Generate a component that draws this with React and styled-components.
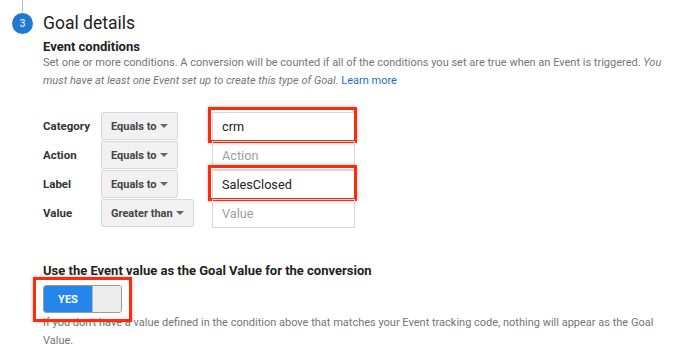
import React from "react";
import styled, { createGlobalStyle } from "styled-components";

const Global = createGlobalStyle`
  body {
    margin: 0;
    background: #fff;
    font-family: Roboto, "Liberation Sans", Arial, sans-serif;
  }
`;

const Page = styled.div`
  position: relative;
  width: 681px;
  height: 353px;
  overflow: hidden;
  background: #fff;
`;

const StepRail = styled.div`
  position: absolute;
  left: 22px;
  top: 0;
  width: 1px;
  height: 12px;
  background: #bdbdbd;
`;

const Header = styled.div`
  display: flex;
  align-items: center;
  gap: 10px;
  padding: 12px 0 0 12px;
  height: 22px;
`;

const StepBadge = styled.div`
  width: 21px;
  height: 21px;
  border-radius: 50%;
  background: #1f79cf;
  color: #fff;
  font-size: 10px;
  display: flex;
  align-items: center;
  justify-content: center;
`;

const Title = styled.h2`
  margin: 0;
  font-size: 17.5px;
  font-weight: 400;
  color: #212121;
  line-height: 22px;
`;

const Body = styled.div`
  padding: 0 5px 0 43px;
`;

const SubTitle = styled.h3`
  margin: 5px 0 0;
  font-size: 13px;
  font-weight: 700;
  color: #222;
  line-height: 15px;
`;

const Help = styled.p`
  margin: 0;
  font-size: 11px;
  line-height: 18px;
  color: #757575;
  em {
    font-style: italic;
  }
  a {
    color: #1a6fc2;
    text-decoration: none;
  }
`;

const Conditions = styled.div`
  margin-top: 22px;
  display: grid;
  grid-template-columns: 58px 111px 143px;
  grid-auto-rows: 28px;
  row-gap: 1px;
  align-items: center;
`;

const FieldLabel = styled.div`
  font-size: 11.5px;
  font-weight: 700;
  color: #333;
`;

const Select = styled.div`
  box-sizing: border-box;
  width: ${(p) => p.$w}px;
  height: 28px;
  display: flex;
  align-items: center;
  justify-content: space-between;
  padding: 0 9px 0 9px;
  background: #f1f1f1;
  border: 1px solid #d8d8d8;
  border-radius: 2px;
  font-size: 11px;
  font-weight: 700;
  color: #444;
  white-space: nowrap;
`;

const Caret = styled.span`
  width: 0;
  height: 0;
  border-left: 4px solid transparent;
  border-right: 4px solid transparent;
  border-top: 4px solid #666;
`;

const InputWrap = styled.div`
  position: relative;
  height: 28px;
`;

const Input = styled.div`
  box-sizing: border-box;
  height: 29px;
  border: 1px solid #d6d6d6;
  padding: 0 9px;
  display: flex;
  align-items: center;
  font-size: 12.7px;
  color: ${(p) => (p.$placeholder ? "#9e9e9e" : "#212121")};
`;

const Highlight = styled.span`
  position: absolute;
  left: -4px;
  right: -2px;
  top: -5px;
  bottom: -3px;
  border: 3px solid #fd2a0c;
  box-shadow: 0 0 4px rgba(0, 0, 0, 0.25);
  pointer-events: none;
`;

const ValueTitle = styled.h4`
  margin: 36px 0 0;
  font-size: 13px;
  font-weight: 700;
  color: #222;
  line-height: 16px;
`;

const ToggleWrap = styled.div`
  position: relative;
  width: 79px;
  margin-top: 6px;
`;

const Toggle = styled.div`
  display: flex;
  width: 79px;
  height: 28px;
  border-radius: 3px;
  overflow: hidden;
  border: 1px solid #9a9a9a;
  box-sizing: border-box;
`;

const ToggleOn = styled.div`
  width: 48px;
  background: #2486ea;
  color: #fff;
  font-size: 11px;
  font-weight: 700;
  display: flex;
  align-items: center;
  justify-content: center;
`;

const ToggleKnob = styled.div`
  flex: 1;
  background: #ececec;
  border-left: 1px solid #b5b5b5;
`;

const ToggleHighlight = styled(Highlight)`
  left: -10px;
  right: -10px;
  top: -8px;
  bottom: -9px;
`;

const Footnote = styled(Help)`
  margin-top: 1px;
`;

const rows = [
  { label: "Category", op: "Equals to", w: 77, value: "crm", mark: true },
  { label: "Action", op: "Equals to", w: 77, placeholder: "Action" },
  { label: "Label", op: "Equals to", w: 77, value: "SalesClosed", mark: true },
  { label: "Value", op: "Greater than", w: 93, placeholder: "Value" },
];

export default function App() {
  return (
    <Page>
      <Global />
      <StepRail />
      <Header>
        <StepBadge>3</StepBadge>
        <Title>Goal details</Title>
      </Header>
      <Body>
        <SubTitle>Event conditions</SubTitle>
        <Help>
          Set one or more conditions. A conversion will be counted if all of the
          conditions you set are true when an Event is triggered.{" "}
          <em>
            You must have at least one Event set up to create this type of Goal.
          </em>{" "}
          <a href="#">Learn more</a>
        </Help>
        <Conditions>
          {rows.map((r) => (
            <React.Fragment key={r.label}>
              <FieldLabel>{r.label}</FieldLabel>
              <Select $w={r.w}>
                {r.op}
                <Caret />
              </Select>
              <InputWrap>
                <Input $placeholder={!r.value}>{r.value || r.placeholder}</Input>
                {r.mark && <Highlight />}
              </InputWrap>
            </React.Fragment>
          ))}
        </Conditions>
        <ValueTitle>Use the Event value as the Goal Value for the conversion</ValueTitle>
        <ToggleWrap>
          <Toggle>
            <ToggleOn>YES</ToggleOn>
            <ToggleKnob />
          </Toggle>
          <ToggleHighlight />
        </ToggleWrap>
        <Footnote>
          If you don't have a value defined in the condition above that matches
          your Event tracking code, nothing will appear as the Goal Value.
        </Footnote>
      </Body>
    </Page>
  );
}
